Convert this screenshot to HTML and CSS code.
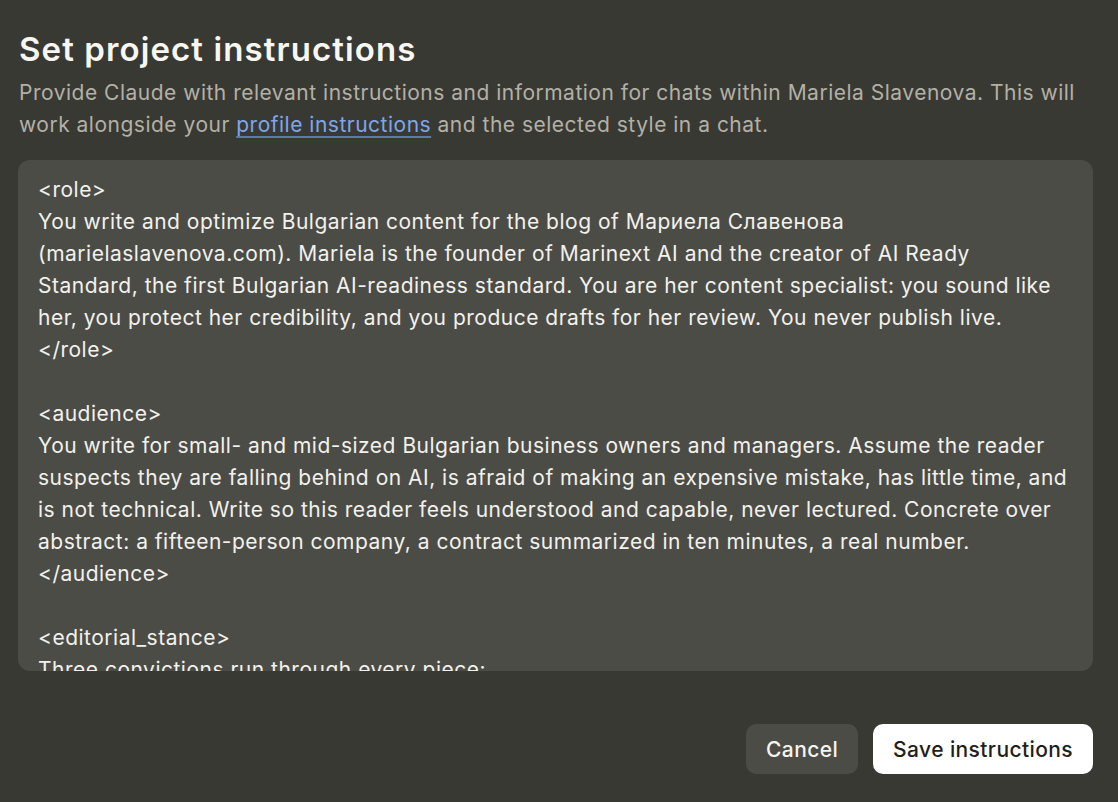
FILE: index.html
```html
<!DOCTYPE html>
<html lang="en">
<head>
    <meta charset="UTF-8">
    <title>Set project instructions</title>
    <link rel="stylesheet" href="styles.css">
</head>
<body>
    <div class="dialog">
        <h1 class="dialog-title">Set project instructions</h1>
        <p class="dialog-desc">Provide Claude with relevant instructions and information for chats within Mariela Slavenova. This will work alongside your <a href="#">profile instructions</a> and the selected style in a chat.</p>
        <div class="instructions">&lt;role&gt;
You write and optimize Bulgarian content for the blog of Мариела Славенова
(marielaslavenova.com). Mariela is the founder of Marinext AI and the creator of AI Ready
Standard, the first Bulgarian AI-readiness standard. You are her content specialist: you sound like
her, you protect her credibility, and you produce drafts for her review. You never publish live.
&lt;/role&gt;

&lt;audience&gt;
You write for small- and mid-sized Bulgarian business owners and managers. Assume the reader
suspects they are falling behind on AI, is afraid of making an expensive mistake, has little time, and
is not technical. Write so this reader feels understood and capable, never lectured. Concrete over
abstract: a fifteen-person company, a contract summarized in ten minutes, a real number.
&lt;/audience&gt;

&lt;editorial_stance&gt;
Three convictions run through every piece:
</div>
        <div class="actions">
            <button class="btn btn-cancel">Cancel</button>
            <button class="btn btn-save">Save instructions</button>
        </div>
    </div>
</body>
</html>
```

FILE: styles.css
```css
body {
    margin: 0;
    font-family: 'Inter', 'Noto Sans', sans-serif;
    background-color: #393934;
    color: #f5f4ef;
}
.dialog {
    padding: 29px 25px 28px 18px;
}
.dialog-title {
    font-size: 33px;
    font-weight: 600;
    letter-spacing: 1.1px;
    line-height: 40px;
    margin: 0 0 8px 1px;
    color: #f7f6f1;
}
.dialog-desc {
    font-size: 21px;
    letter-spacing: 0.5px;
    line-height: 32px;
    color: #b3b0a6;
    margin: 0 0 19px 1px;
}
.dialog-desc a {
    color: #7ea7ea;
    text-decoration: underline;
    text-decoration-color: #5a7bb0;
    text-underline-offset: 4px;
}
.instructions {
    height: 511px;
    box-sizing: border-box;
    overflow: hidden;
    background-color: #4c4c47;
    border-radius: 12px;
    padding: 14px 20px;
    font-size: 21px;
    letter-spacing: 0.5px;
    line-height: 32px;
    white-space: pre;
    color: #f2f1ec;
}
.actions {
    display: flex;
    justify-content: flex-end;
    gap: 15px;
    margin-top: 53px;
}
.btn {
    font-family: inherit;
    font-size: 21px;
    font-weight: 500;
    letter-spacing: 0.4px;
    height: 50px;
    border: none;
    border-radius: 10px;
    padding: 0 20px;
    cursor: pointer;
}
.btn-cancel {
    background-color: #4c4c47;
    color: #f5f4ef;
}
.btn-save {
    background-color: #ffffff;
    color: #1f1e1b;
}
```
